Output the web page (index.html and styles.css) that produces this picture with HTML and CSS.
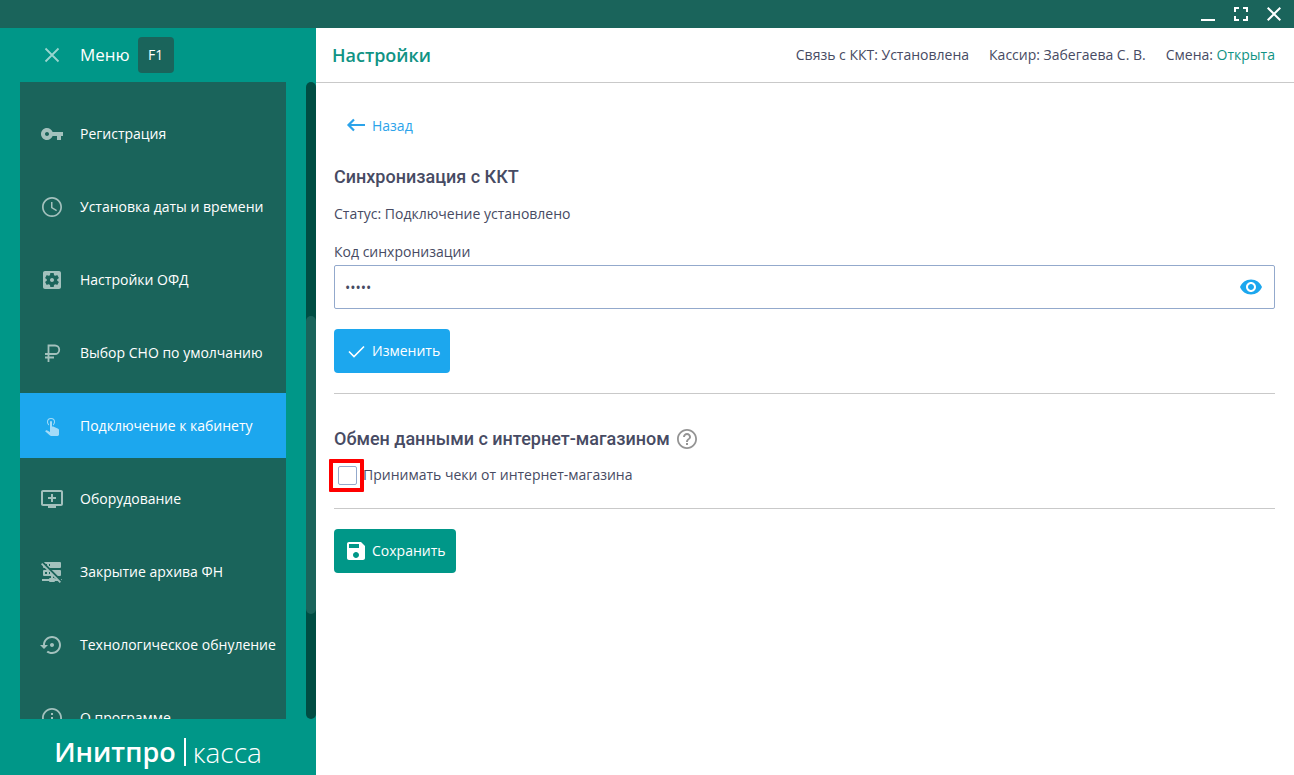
FILE: index.html
```html
<!DOCTYPE html>
<html lang="ru">
<head>
<meta charset="utf-8">
<title>Настройки</title>
<link rel="stylesheet" href="styles.css">
</head>
<body>
<div class="app">
  <div class="titlebar">
    <button class="win-btn" type="button" aria-label="Свернуть"><svg class="win-icon" viewBox="0 0 14 14"><path d="M0 12h14v2H0z"/></svg></button>
    <button class="win-btn" type="button" aria-label="Развернуть"><svg class="win-icon" viewBox="0 0 14 14"><path d="M0 0h5v2H2v3H0zM9 0h5v5h-2V2H9zM0 9h2v3h3v2H0zM12 9h2v5H9v-2h3z"/></svg></button>
    <button class="win-btn" type="button" aria-label="Закрыть"><svg class="win-icon" viewBox="0 0 14 14"><path d="M1.400 0 7 5.600 12.600 0 14 1.400 8.400 7 14 12.600 12.600 14 7 8.400 1.400 14 0 12.600 5.600 7 0 1.400z"/></svg></button>
  </div>
  <div class="body">
    <aside class="sidebar">
      <div class="menu-head">
        <button class="menu-toggle" type="button">
          <svg class="icon dim" viewBox="0 0 24 24"><path d="M5.500 5.500l13 13M18.500 5.500l-13 13" fill="none" stroke="currentColor" stroke-width="1.800"/></svg>
          <span>Меню</span>
        </button>
        <kbd class="key">F1</kbd>
      </div>
      <div class="menu-area">
        <nav class="nav">
          <a class="item" href="#"><svg class="icon dim" viewBox="0 0 24 24"><path d="M12.650 10C11.830 7.670 9.610 6 7 6c-3.310 0-6 2.690-6 6s2.690 6 6 6c2.610 0 4.830-1.670 5.650-4H17v4h4v-4h2v-4H12.650zM7 14c-1.100 0-2-.9-2-2s.9-2 2-2 2 .9 2 2-.9 2-2 2z"/></svg>Регистрация</a>
          <a class="item" href="#"><svg class="icon dim" viewBox="0 0 24 24"><path d="M11.990 2C6.470 2 2 6.480 2 12s4.470 10 9.990 10C17.520 22 22 17.520 22 12S17.520 2 11.990 2zM12 20.300c-4.600 0-8.300-3.700-8.300-8.300S7.400 3.700 12 3.700s8.300 3.700 8.300 8.300-3.700 8.300-8.300 8.300zM12.500 7H11v6l5.250 3.150.75-1.230-4.500-2.670z"/></svg>Установка даты и времени</a>
          <a class="item" href="#"><svg class="icon dim" viewBox="0 0 24 24"><path d="M12 10c-1.100 0-2 .9-2 2s.9 2 2 2 2-.9 2-2-.9-2-2-2zm7-7H5c-1.110 0-2 .9-2 2v14c0 1.100.89 2 2 2h14c1.110 0 2-.9 2-2V5c0-1.100-.89-2-2-2zm-1.750 9c0 .23-.02.46-.05.68l1.480 1.160c.13.11.17.3.08.45l-1.400 2.420c-.09.15-.27.21-.43.15l-1.740-.7c-.36.28-.76.51-1.180.69l-.26 1.850c-.03.17-.18.3-.35.3h-2.800c-.17 0-.32-.13-.35-.29l-.26-1.850c-.43-.18-.82-.41-1.180-.69l-1.740.7c-.16.06-.34 0-.43-.15l-1.400-2.420c-.09-.15-.05-.34.08-.45l1.480-1.160c-.03-.23-.05-.46-.05-.69 0-.23.02-.46.05-.68l-1.480-1.160c-.13-.11-.17-.3-.08-.45l1.400-2.420c.09-.15.27-.21.43-.15l1.740.7c.36-.28.76-.51 1.180-.69l.26-1.850c.03-.17.18-.3.35-.3h2.800c.17 0 .32.13.35.29l.26 1.850c.43.18.82.41 1.180.69l1.740-.7c.16-.06.34 0 .43.15l1.400 2.420c.09.15.05.34-.08.45l-1.480 1.160c.03.23.05.46.05.69z"/></svg>Настройки ОФД</a>
          <a class="item" href="#"><svg class="icon dim" viewBox="0 0 24 24"><path d="M8.500 21V4.500h6.500a4.200 4.200 0 0 1 0 8.500H5M5 16.500h9" fill="none" stroke="currentColor" stroke-width="1.800"/></svg>Выбор СНО по умолчанию</a>
          <a class="item active" href="#" aria-current="page"><svg class="icon dim" viewBox="0 1 24 24"><path d="M10 9A1 1 0 0 1 11 8A1 1 0 0 1 12 9V13.470L13.210 13.600L18.150 15.790C18.680 16.030 19 16.560 19 17.140V21.500C18.970 22.320 18.320 22.970 17.500 23H11C10.620 23 10.260 22.850 10 22.570L5.100 18.370L5.840 17.600C6.030 17.390 6.300 17.280 6.580 17.280H6.800L10 19V9M11 5A4 4 0 0 1 15 9C15 10.500 14.200 11.770 13 12.460V11.240C13.610 10.690 14 9.890 14 9A3 3 0 0 0 11 6A3 3 0 0 0 8 9C8 9.890 8.390 10.690 9 11.240V12.460C7.800 11.770 7 10.500 7 9A4 4 0 0 1 11 5Z"/></svg>Подключение к кабинету</a>
          <a class="item" href="#"><svg class="icon dim" viewBox="0 0 24 24"><path d="M21 3H3c-1.110 0-2 .89-2 2v12c0 1.100.89 2 2 2h5v2h8v-2h5c1.100 0 1.990-.9 1.990-2L23 5c0-1.110-.9-2-2-2zm0 14H3V5h18v12zm-5-7v2h-3v3h-2v-3H8v-2h3V7h2v3h3z"/></svg>Оборудование</a>
          <a class="item" href="#"><svg class="icon dim" viewBox="0 0 24 24"><path d="M13 18H14A1 1 0 0 1 15 19H15.730L13 16.270V18M22 19V20.180L20.820 19H22M21 21.720L19.730 23L17.730 21H15A1 1 0 0 1 14 22H10A1 1 0 0 1 9 21H2V19H9A1 1 0 0 1 10 18H11V16H4A1 1 0 0 1 3 15V11A1 1 0 0 1 4 10H6.730L4.730 8H4A1 1 0 0 1 3 7V6.270L1 4.270L2.280 3L21 21.720M4 2H20A1 1 0 0 1 21 3V7A1 1 0 0 1 20 8H9.820L7 5.180V4H5.820L3.840 2H4M20 10A1 1 0 0 1 21 11V15A1 1 0 0 1 20 16H17.820L11.820 10H20M9 6H10V4H9V6M9 14H10V12H9V14M5 12V14H7V12H5Z"/></svg>Закрытие архива ФН</a>
          <a class="item" href="#"><svg class="icon dim" viewBox="0 0 24 24"><path d="M14 12c0-1.100-.9-2-2-2s-2 .9-2 2 .9 2 2 2 2-.9 2-2zm-2-9c-4.970 0-9 4.030-9 9H0l4 4 4-4H5c0-3.870 3.130-7 7-7s7 3.130 7 7-3.130 7-7 7c-1.510 0-2.910-.49-4.060-1.300l-1.420 1.440C8.040 20.300 9.940 21 12 21c4.970 0 9-4.030 9-9s-4.030-9-9-9z"/></svg>Технологическое обнуление</a>
          <a class="item" href="#"><svg class="icon dim" viewBox="0 0 24 24"><path d="M11 17h2v-6h-2v6zm1-15C6.480 2 2 6.480 2 12s4.480 10 10 10 10-4.480 10-10S17.520 2 12 2zm0 18.200c-4.500 0-8.200-3.700-8.200-8.200S7.500 3.800 12 3.800s8.200 3.700 8.200 8.200-3.700 8.200-8.200 8.200zM11 9h2V7h-2v2z"/></svg>О программе</a>
        </nav>
        <div class="track"><div class="thumb"></div></div>
      </div>
      <div class="brand"><strong class="brand-name">Инитпро</strong><span class="brand-sub">касса</span></div>
    </aside>
    <main class="main">
      <header class="topbar">
        <h1 class="title">Настройки</h1>
        <div class="status">
          <span>Связь с ККТ: Установлена</span>
          <span>Кассир: Забегаева С. В.</span>
          <span>Смена: <span class="open">Открыта</span></span>
        </div>
      </header>
      <div class="content">
        <a class="btn back" href="#"><svg class="icon" viewBox="0 0 24 24"><path d="M21 11H5M10 5.500 4.500 11l5.500 5.500" fill="none" stroke="currentColor" stroke-width="2.200"/></svg>Назад</a>
        <section class="section sync">
          <h2 class="heading">Синхронизация с ККТ</h2>
          <p class="state">Статус: Подключение установлено</p>
          <label class="label" for="code">Код синхронизации</label>
          <div class="field">
            <input class="input" id="code" type="password" value="12345">
            <button class="reveal" type="button" aria-label="Показать код"><svg class="icon" viewBox="0 0 24 24"><path d="M12 4.500C7 4.500 2.730 7.610 1 12c1.730 4.390 6 7.500 11 7.500s9.270-3.110 11-7.500c-1.730-4.390-6-7.500-11-7.500zM12 17c-2.760 0-5-2.240-5-5s2.240-5 5-5 5 2.240 5 5-2.240 5-5 5zm0-8c-1.660 0-3 1.340-3 3s1.340 3 3 3 3-1.340 3-3-1.340-3-3-3z"/></svg></button>
          </div>
          <button class="btn blue" type="button"><svg class="icon" viewBox="0 0 24 24"><path d="M5 12.500l5 5L20 7.500" fill="none" stroke="currentColor" stroke-width="1.600"/></svg>Изменить</button>
        </section>
        <section class="section exchange">
          <h2 class="heading">Обмен данными с интернет-магазином
            <svg class="icon help" viewBox="0 0 24 24"><path d="M11 18h2v-2h-2v2zm1-16C6.480 2 2 6.480 2 12s4.480 10 10 10 10-4.480 10-10S17.520 2 12 2zm0 18.200c-4.500 0-8.200-3.700-8.200-8.200S7.500 3.800 12 3.800s8.200 3.700 8.200 8.200-3.700 8.200-8.200 8.200zM12 6c-2.210 0-4 1.790-4 4h2c0-1.100.9-2 2-2s2 .9 2 2c0 2-3 1.750-3 5h2c0-2.250 3-2.500 3-5 0-2.210-1.790-4-4-4z"/></svg>
          </h2>
          <div class="check-row">
            <span class="check-wrap"><input class="check" id="accept" type="checkbox"><span class="marker"></span></span>
            <label for="accept">Принимать чеки от интернет-магазина</label>
          </div>
        </section>
        <button class="btn green" type="button"><svg class="icon" viewBox="0 0 24 24"><path d="M17 3H5c-1.110 0-2 .9-2 2v14c0 1.100.89 2 2 2h14c1.100 0 2-.9 2-2V7l-4-4zm-5 16c-1.660 0-3-1.340-3-3s1.340-3 3-3 3 1.340 3 3-1.340 3-3 3zm3-10H5V5h10v4z"/></svg>Сохранить</button>
      </div>
    </main>
  </div>
</div>
</body>
</html>
```
FILE: styles.css
```css
* { box-sizing: border-box; }

body {
  margin: 0;
  font: 14px/20px "Open Sans", sans-serif;
  color: #474b63;
  background: #fff;
}

button, input { font: inherit; color: inherit; }
button { border: 0; background: none; padding: 0; cursor: pointer; }
a { color: inherit; text-decoration: none; }
svg { display: block; fill: currentColor; }

.app { display: flex; flex-direction: column; height: 100vh; }

.titlebar {
  display: flex;
  flex: none;
  justify-content: flex-end;
  align-items: center;
  gap: 19px;
  height: 28px;
  padding-right: 13px;
  background: #1a645b;
  color: #fff;
}
.win-icon { width: 14px; height: 14px; }

.body { display: flex; flex: 1; min-height: 0; }

.icon { width: 24px; height: 24px; flex: none; }
.dim { opacity: 0.6; }

.sidebar {
  display: flex;
  flex: none;
  flex-direction: column;
  width: 316px;
  background: #009788;
  color: #fff;
}
.menu-head {
  display: flex;
  flex: none;
  align-items: center;
  gap: 8px;
  height: 54px;
  padding-left: 40px;
}
.menu-toggle {
  display: flex;
  align-items: center;
  gap: 16px;
  font-size: 17px;
}
.key {
  width: 36px;
  border-radius: 4px;
  background: #1a645b;
  font: 14px/36px "Open Sans", sans-serif;
  text-align: center;
}

.menu-area {
  display: flex;
  flex: 1;
  justify-content: space-between;
  min-height: 0;
  padding-left: 20px;
}
.nav {
  display: flex;
  flex-direction: column;
  gap: 8px;
  width: 266px;
  padding-top: 19px;
  overflow: hidden;
  background: #1a645b;
}
.item {
  display: flex;
  flex: none;
  align-items: center;
  gap: 16px;
  height: 65px;
  padding-left: 20px;
  white-space: nowrap;
}
.active { background: #1ca7ee; }

.track {
  display: flex;
  flex-direction: column;
  width: 10px;
  border-radius: 5px;
  background: #004d43;
}
.track::before { content: ""; flex: 234; }
.track::after { content: ""; flex: 105; }
.thumb { flex: 298; border-radius: 5px; background: #1a645b; }

.brand {
  display: flex;
  flex: none;
  align-items: center;
  justify-content: center;
  gap: 8px;
  height: 56px;
  padding-top: 10px;
  font: 28px/28px "Open Sans", sans-serif;
}
.brand-name { font-size: 27px; font-weight: 600; }
.brand-sub {
  padding-left: 7px;
  border-left: 2px solid #fff;
  font-weight: 300;
}

.main { flex: 1; min-width: 0; }
.topbar {
  display: flex;
  align-items: center;
  justify-content: space-between;
  height: 55px;
  padding: 0 19px 0 16px;
  border-bottom: 1px solid #c9c9c9;
}
.title {
  margin: 0;
  font-size: 18px;
  font-weight: 600;
  color: #109384;
}
.status { display: flex; gap: 20px; }
.open { color: #109384; }

.content { padding: 21px 19px 20px 18px; }

.btn {
  display: inline-flex;
  align-items: center;
  gap: 4px;
  height: 44px;
  padding: 0 10px;
  border-radius: 4px;
  color: #fff;
}
.back { color: #2ba3ea; }
.blue { background: #1ca7ee; }
.green { background: #009788; }

.section {
  margin-bottom: 20px;
  border-bottom: 1px solid #c9c9c9;
}
.sync { padding: 17px 0 20px; }
.exchange { padding: 13px 0 23px; }

.heading {
  display: flex;
  align-items: center;
  gap: 5px;
  margin: 0;
  font: 500 18px/24px Roboto, sans-serif;
}
.help { color: #949494; }
.state { margin: 15px 0 18px; }
.label { display: block; margin-bottom: 3px; }

.field { position: relative; margin-bottom: 20px; }
.input {
  display: block;
  width: 100%;
  height: 44px;
  padding: 0 44px 0 10px;
  border: 1px solid #93a9cc;
  border-radius: 2px;
  background: #fff;
}
.reveal {
  position: absolute;
  top: 10px;
  right: 12px;
  color: #1ca7ee;
}

.check-row {
  display: flex;
  align-items: center;
  gap: 6px;
  margin-top: 14px;
  padding-left: 4px;
}
.check-wrap { position: relative; }
.check {
  display: block;
  appearance: none;
  width: 19px;
  height: 19px;
  margin: 0;
  border: 1px solid #93a9cc;
  border-radius: 2px;
  background: #fff;
}
.marker {
  position: absolute;
  inset: -7px -7px -7px -9px;
  border: 4px solid #f00;
  border-radius: 1px;
  pointer-events: none;
}
```
